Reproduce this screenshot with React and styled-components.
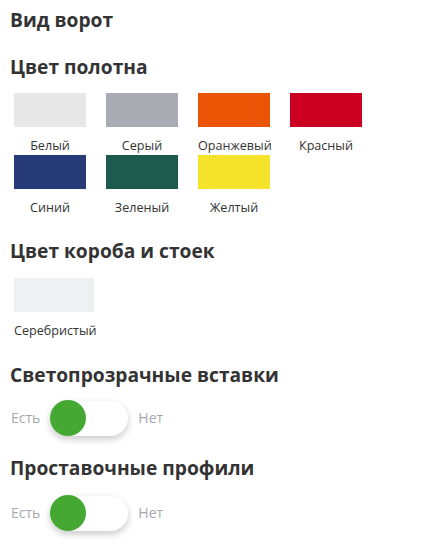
import React from "react";
import styled, { createGlobalStyle } from "styled-components";

const Global = createGlobalStyle`
  body {
    margin: 0;
    background: #fff;
    font-family: "Open Sans", "Noto Sans", sans-serif;
    color: #333;
  }
`;

const Page = styled.div`
  padding: 8px 0 0 10px;
  display: flex;
  flex-direction: column;
`;

const Section = styled.section`
  margin-bottom: ${(p) => p.$mb ?? 23}px;
`;

const Heading = styled.h2`
  margin: 0 0 ${(p) => p.$mb ?? 14}px;
  font-size: 19.2px;
  line-height: 24px;
  font-weight: 700;
  color: #333;
`;

const Swatches = styled.div`
  display: flex;
  flex-wrap: wrap;
  width: 368px;
  column-gap: 20px;
  padding-left: 4px;
`;

const Item = styled.div`
  width: ${(p) => p.$w}px;
  display: flex;
  flex-direction: column;
`;

const Swatch = styled.div`
  height: 34px;
  background: ${(p) => p.$c};
`;

const Label = styled.div`
  margin-top: 10px;
  font-size: 12.6px;
  line-height: 18px;
  white-space: nowrap;
  color: #333;
  text-align: ${(p) => (p.$left ? "left" : "center")};
`;

const ToggleRow = styled.div`
  display: flex;
  align-items: center;
  gap: 10px;
  height: 36px;
  padding-left: 1px;
`;

const ToggleText = styled.span`
  font-size: 14px;
  color: #a4a8ae;
  line-height: 18px;
`;

const Track = styled.div`
  width: 78px;
  height: 35px;
  border-radius: 18px;
  background: #fff;
  box-shadow: 0 3px 7px rgba(0, 0, 0, 0.22);
  display: flex;
  align-items: center;
  justify-content: ${(p) => (p.$on ? "flex-start" : "flex-end")};
`;

const Knob = styled.div`
  width: 36px;
  height: 36px;
  border-radius: 50%;
  background: #44a832;
`;

const colors = [
  ["Белый", "#e8e8e8"],
  ["Серый", "#a9acb3"],
  ["Оранжевый", "#ea5404"],
  ["Красный", "#cc0020"],
  ["Синий", "#263a78"],
  ["Зеленый", "#1e5b4f"],
  ["Желтый", "#f4e32a"],
];

function Toggle() {
  return (
    <ToggleRow>
      <ToggleText>Есть</ToggleText>
      <Track $on>
        <Knob />
      </Track>
      <ToggleText>Нет</ToggleText>
    </ToggleRow>
  );
}

export default function App() {
  return (
    <>
      <Global />
      <Page>
        <Section>
          <Heading $mb={0}>Вид ворот</Heading>
        </Section>
        <Section $mb={22}>
          <Heading>Цвет полотна</Heading>
          <Swatches>
            {colors.map(([n, c]) => (
              <Item key={n} $w={72}>
                <Swatch $c={c} />
                <Label>{n}</Label>
              </Item>
            ))}
          </Swatches>
        </Section>
        <Section>
          <Heading $mb={15}>Цвет короба и стоек</Heading>
          <Swatches>
            <Item $w={80}>
              <Swatch $c="#eff0f1" />
              <Label $left>Серебристый</Label>
            </Item>
          </Swatches>
        </Section>
        <Section $mb={20}>
          <Heading $mb={13}>Светопрозрачные вставки</Heading>
          <Toggle />
        </Section>
        <Section>
          <Heading $mb={15}>Проставочные профили</Heading>
          <Toggle />
        </Section>
      </Page>
    </>
  );
}
